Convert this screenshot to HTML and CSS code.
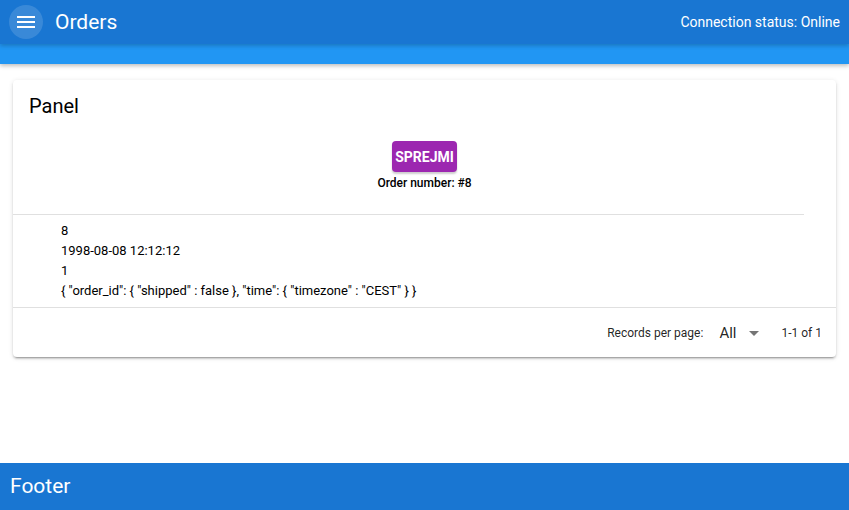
FILE: index.html
```html
<!DOCTYPE html>
<html lang="en">
<head>
    <meta charset="UTF-8">
    <meta name="viewport" content="width=device-width, initial-scale=1.0">
    <title>Orders</title>
    <link rel="stylesheet" href="styles.css">
</head>
<body>
    <div class="app">
        <header class="app-bar">
            <div class="toolbar">
                <button class="menu-btn" aria-label="Menu">
                    <svg width="24" height="24" viewBox="0 0 24 24">
                        <path d="M3 18h18v-2H3v2zm0-5h18v-2H3v2zm0-7v2h18V6H3z" fill="#fff"/>
                    </svg>
                </button>
                <div class="toolbar-title">Orders</div>
                <div class="spacer"></div>
                <div class="status">Connection status: Online</div>
            </div>
            <div class="toolbar-ext"></div>
        </header>

        <main class="content">
            <div class="card">
                <div class="card-title">Panel</div>
                <div class="card-actions">
                    <button class="accept-btn">SPREJMI</button>
                    <div class="order-number">Order number: #8</div>
                </div>
                <hr class="divider short">
                <div class="order-data">
                    <div>8</div>
                    <div>1998-08-08 12:12:12</div>
                    <div>1</div>
                    <div>{ "order_id": { "shipped" : false }, "time": { "timezone" : "CEST" } }</div>
                </div>
                <hr class="divider">
                <div class="table-footer">
                    <span class="rpp-label">Records per page:</span>
                    <div class="rpp-select">
                        <span>All</span>
                        <span class="caret"></span>
                    </div>
                    <span class="page-info">1-1 of 1</span>
                </div>
            </div>
        </main>

        <footer class="app-footer">Footer</footer>
    </div>
</body>
</html>
```

FILE: styles.css
```css
* {
    margin: 0;
    padding: 0;
    box-sizing: border-box;
    font-family: Roboto, "Liberation Sans", sans-serif;
}

body {
    background: #fff;
    color: rgba(0, 0, 0, 0.87);
    height: 510px;
    overflow: hidden;
}

.app {
    display: flex;
    flex-direction: column;
    height: 100vh;
}

.app-bar {
    background-color: #2196f3;
    box-shadow: 0 2px 4px rgba(0, 0, 0, 0.25);
    position: relative;
    z-index: 2;
}

.toolbar {
    height: 44px;
    background-color: #1976d2;
    display: flex;
    align-items: center;
    padding: 0 9px;
    color: #fff;
    box-shadow: 0 2px 4px rgba(0, 0, 0, 0.2);
    position: relative;
}

.toolbar-ext {
    height: 20px;
}

.menu-btn {
    width: 34px;
    height: 34px;
    border-radius: 50%;
    border: none;
    background-color: rgba(255, 255, 255, 0.14);
    display: flex;
    align-items: center;
    justify-content: center;
    cursor: pointer;
}

.toolbar-title {
    font-size: 21px;
    margin-left: 12px;
}

.spacer {
    flex: 1;
}

.status {
    font-size: 14px;
    font-weight: 400;
}

.content {
    flex: 1;
    padding: 16px 13px;
}

.card {
    background: #fff;
    border-radius: 4px;
    box-shadow: 0 3px 1px -2px rgba(0, 0, 0, 0.2), 0 2px 2px 0 rgba(0, 0, 0, 0.14), 0 1px 5px 0 rgba(0, 0, 0, 0.12);
}

.card-title {
    font-size: 20px;
    line-height: 32px;
    padding: 10px 16px 0;
    color: #000;
}

.card-actions {
    display: flex;
    flex-direction: column;
    align-items: center;
    padding-top: 19px;
    height: 92px;
}

.accept-btn {
    background-color: #9c27b0;
    color: #fff;
    border: none;
    border-radius: 4px;
    font-size: 14px;
    font-weight: 700;
    height: 31px;
    padding: 0 3px;
    box-shadow: 0 2px 2px rgba(0, 0, 0, 0.2);
    cursor: pointer;
}

.order-number {
    font-size: 12px;
    font-weight: 500;
    color: #000;
    margin-top: 4px;
}

.divider {
    border: none;
    border-top: 1px solid rgba(0, 0, 0, 0.12);
}

.divider.short {
    margin-right: 32px;
}

.order-data {
    padding: 6px 48px 6px;
    font-size: 13px;
    line-height: 20px;
    color: #000;
}

.table-footer {
    display: flex;
    align-items: center;
    justify-content: flex-end;
    height: 49px;
    padding: 0 14px;
    font-size: 12px;
    color: rgba(0, 0, 0, 0.87);
}

.rpp-select {
    display: flex;
    align-items: center;
    margin-left: 16px;
    font-size: 15px;
    gap: 13px;
}

.caret {
    width: 0;
    height: 0;
    border-left: 5px solid transparent;
    border-right: 5px solid transparent;
    border-top: 5px solid #757575;
    margin-top: 1px;
}

.page-info {
    margin-left: 22px;
}

.app-footer {
    height: 47px;
    background-color: #1976d2;
    color: #fff;
    font-size: 21px;
    line-height: 47px;
    padding: 0 10px;
}
```
